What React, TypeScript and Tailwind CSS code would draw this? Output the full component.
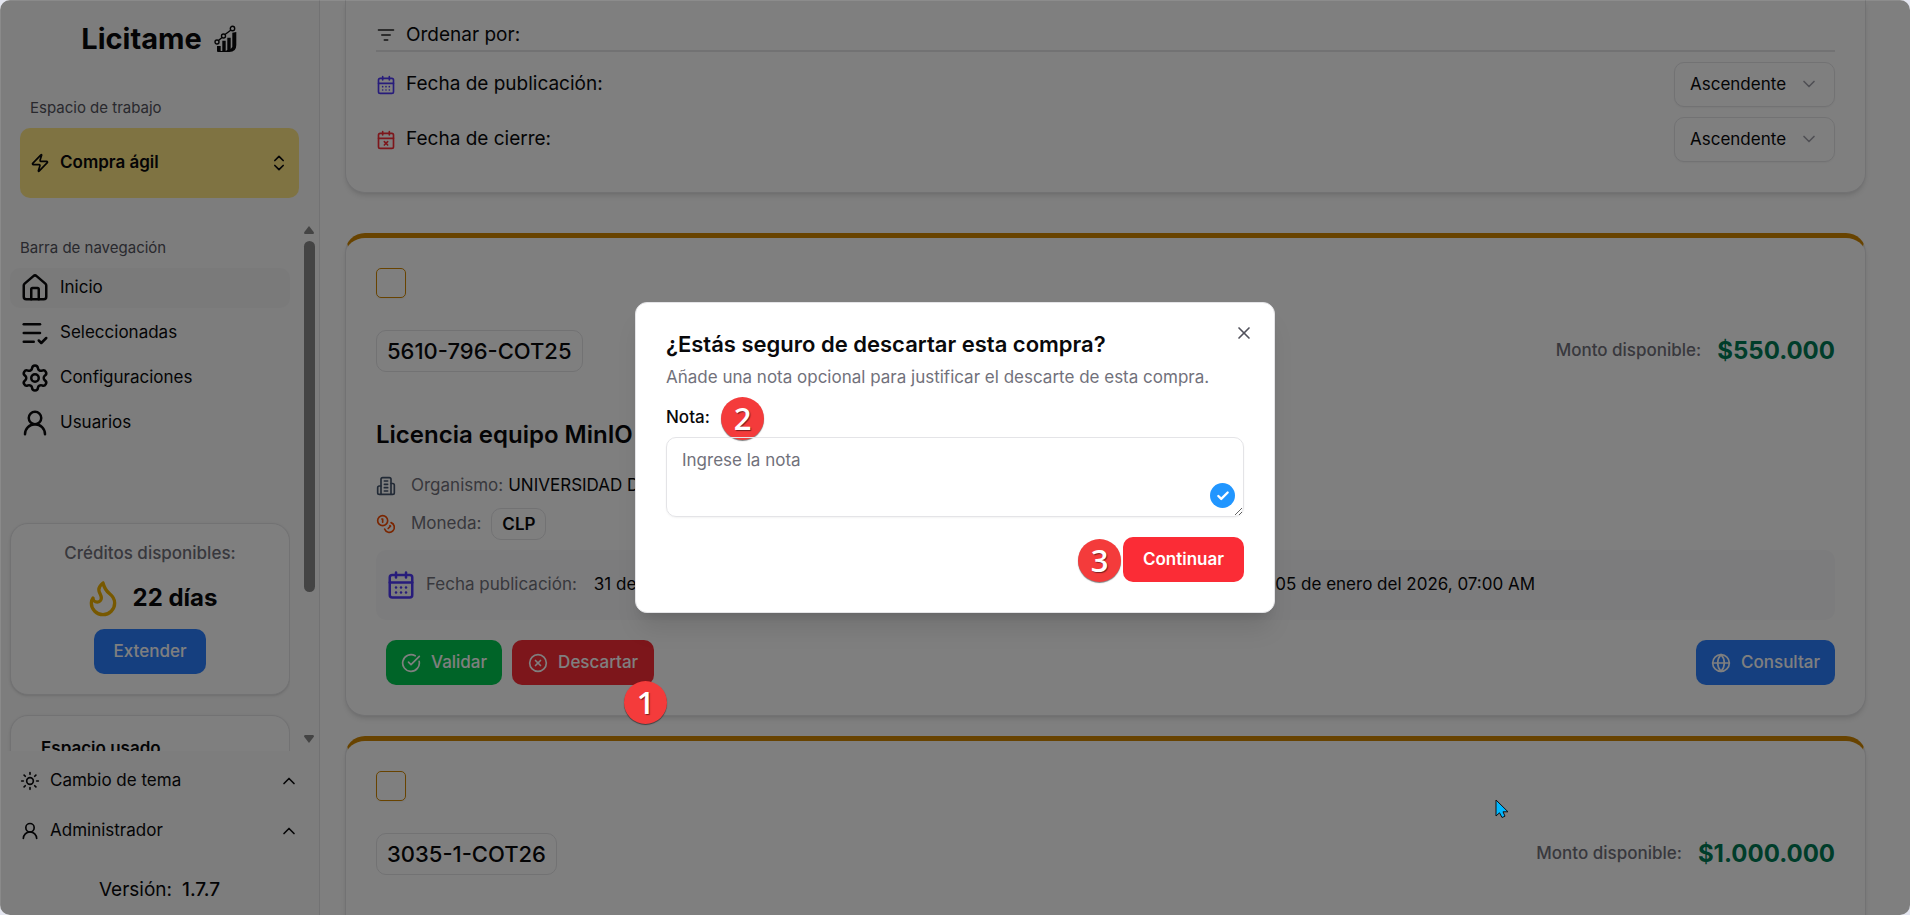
import React, { useState } from 'react';
import {
    CalendarDays,
    CalendarX,
    Check,
    ChevronDown,
    ChevronUp,
    ChevronsUpDown,
    CircleCheckBig,
    CircleX,
    Coins,
    Flame,
    Globe,
    House,
    ListCheck,
    Settings,
    Sun,
    UserRound,
    X,
    Zap,
} from 'lucide-react';

interface PurchaseDetails {
    title: string;
    organization: string;
    currency: string;
    publishedAt: string;
    closesAt: string;
}

interface Purchase {
    code: string;
    amount: string;
    details?: PurchaseDetails;
}

const purchases: Purchase[] = [
    {
        code: '5610-796-COT25',
        amount: '$550.000',
        details: {
            title: 'Licencia equipo MinIO',
            organization: 'UNIVERSIDAD DE CHILE',
            currency: 'CLP',
            publishedAt: '31 de diciembre del 2025, 10:00 AM',
            closesAt: '05 de enero del 2026, 07:00 AM',
        },
    },
    { code: '3035-1-COT26', amount: '$1.000.000' },
];

const navItems = [
    { label: 'Inicio', icon: House, active: true },
    { label: 'Seleccionadas', icon: ListCheck, active: false },
    { label: 'Configuraciones', icon: Settings, active: false },
    { label: 'Usuarios', icon: UserRound, active: false },
];

const Logo = () => (
    <svg width="24" height="28" viewBox="0 0 24 28" fill="none" stroke="currentColor">
        <path d="M4.500 15.500 8 12.500M11 9.500 17 5" strokeWidth="1.4" />
        <circle cx="3" cy="17" r="2" strokeWidth="1.4" />
        <circle cx="9.500" cy="11" r="2" strokeWidth="1.4" />
        <circle cx="18.500" cy="3.500" r="2.200" strokeWidth="1.4" />
        <path
            d="M3 21h3.700v5h1.600V15.700h3.400V26l1.600-1V12.700h3.400V24l1.600-2V7.800l4-.8v13q0 7-7 7H4a1 1 0 0 1-1-1z"
            fill="currentColor"
            stroke="none"
        />
    </svg>
);

const FilterIcon = () => (
    <svg width="20" height="20" viewBox="0 0 24 24" fill="none" stroke="#222" strokeWidth="2" strokeLinecap="round">
        <path d="M3 6h18M7 12h10M10 18h4" />
    </svg>
);

const BuildingIcon = () => (
    <svg
        className="text-slate-600"
        width="20"
        height="20"
        viewBox="0 0 24 24"
        fill="none"
        stroke="currentColor"
        strokeWidth="2"
        strokeLinecap="round"
        strokeLinejoin="round">
        <path d="M6 22V4a2 2 0 0 1 2-2h8a2 2 0 0 1 2 2v18Z" />
        <path d="M6 12H4a2 2 0 0 0-2 2v6a2 2 0 0 0 2 2h2M18 9h2a2 2 0 0 1 2 2v9a2 2 0 0 1-2 2h-2" />
        <path d="M10 6h4M10 10h4M10 14h4M10 18h4" />
    </svg>
);

const StepBadge: React.FC<{ step: number; className: string }> = ({ step, className }) => (
    <span
        className={`absolute flex size-[43px] items-center justify-center rounded-full bg-[#f43b3b] font-['Open_Sans',sans-serif] text-[31px] font-semibold text-white shadow-[0_1px_1px_rgba(0,0,0,0.5)] text-shadow-[1px_1px_1px_rgba(0,0,0,0.5)] ${className}`}>
        {step}
    </span>
);

const Sidebar = () => (
    <aside className="flex w-80 shrink-0 flex-col border-r border-zinc-200 bg-[#fafafa]">
        <div className="flex h-[78px] items-center justify-center gap-3">
            <h1 className="text-[29px] font-bold">Licitame</h1>
            <Logo />
        </div>

        <div className="px-5 pt-[15px]">
            <p className="px-[10px] text-[15px] leading-[30px] text-zinc-600">Espacio de trabajo</p>
            <button className="mt-[5px] flex h-[70px] w-[279px] items-center gap-[10px] rounded-[10px] bg-amber-200 px-[10px]">
                <Zap size={20} />
                <span className="flex-1 text-left text-[17px] font-semibold">Compra ágil</span>
                <ChevronsUpDown size={20} />
            </button>
        </div>

        <div className="mt-6 flex min-h-0 flex-1">
            <div className="min-w-0 flex-1 overflow-hidden pl-[10px]">
                <nav>
                    <p className="mt-2 px-[10px] text-[15px] leading-9 text-zinc-600">Barra de navegación</p>
                    <ul className="flex flex-col gap-[5px] pt-[2px]">
                        {navItems.map((item) => (
                            <li key={item.label}>
                                <a
                                    href="#"
                                    className={`flex h-10 items-center gap-[10px] rounded-[10px] px-[10px] text-[17px] ${
                                        item.active ? 'bg-zinc-100' : ''
                                    }`}>
                                    <item.icon size={30} />
                                    {item.label}
                                </a>
                            </li>
                        ))}
                    </ul>
                </nav>

                <div className="mt-20 flex flex-col items-center rounded-[18px] border border-zinc-200 bg-white pt-[14px] pb-5 shadow-sm">
                    <p className="text-[17px] leading-[30px] font-medium text-zinc-500">Créditos disponibles:</p>
                    <div className="mt-[10px] flex h-10 items-center gap-[10px]">
                        <Flame size={40} className="text-[#efb100]" />
                        <span className="text-2xl font-bold">22 días</span>
                    </div>
                    <button className="mt-[11px] h-[45px] rounded-[10px] bg-[#2b7fff] px-5 text-[17px] font-medium text-white">
                        Extender
                    </button>
                </div>

                <div className="mt-5 rounded-[18px] border border-zinc-200 bg-white px-[30px] pt-5 pb-5 shadow-sm">
                    <p className="text-[17px] leading-6 font-semibold">Espacio usado</p>
                </div>
            </div>

            <div className="flex w-[29px] flex-col items-center pt-1 pb-2 pl-[9px]">
                <svg width="10" height="8" viewBox="0 0 10 8" fill="#888">
                    <path d="M5 0 10 6.500Q10 8 9 8H1Q0 8 0 6.500Z" />
                </svg>
                <div className="mt-[7px] h-[351px] w-[11px] rounded-full bg-[#888]" />
                <svg className="mt-auto" width="10" height="8" viewBox="0 0 10 8" fill="#888">
                    <path d="M5 8 10 1.500Q10 0 9 0H1Q0 0 0 1.500Z" />
                </svg>
            </div>
        </div>

        <div className="flex flex-col gap-[10px] pt-[10px] text-[17px]">
            <button className="flex h-10 items-center gap-[10px] px-5">
                <Sun size={20} />
                <span className="flex-1 text-left">Cambio de tema</span>
                <ChevronUp size={20} />
            </button>
            <button className="flex h-10 items-center gap-[10px] px-5">
                <UserRound size={20} />
                <span className="flex-1 text-left">Administrador</span>
                <ChevronUp size={20} />
            </button>
        </div>
        <p className="flex items-center justify-center gap-[10px] pt-6 pb-[10px] text-[19px] leading-[30px]">
            Versión: <span className="font-medium">1.7.7</span>
        </p>
    </aside>
);

interface SortRowProps {
    id: string;
    label: string;
    icon: React.ReactNode;
}

const SortRow: React.FC<SortRowProps> = ({ id, label, icon }) => {
    const [order, setOrder] = useState<string>('asc');

    return (
        <div className="flex items-center justify-between">
            <label htmlFor={id} className="flex items-center gap-[10px] text-[19px]">
                {icon}
                {label}
            </label>
            <div className="relative">
                <select
                    id={id}
                    value={order}
                    onChange={(e) => setOrder(e.target.value)}
                    className="block h-[45px] w-[161px] appearance-none rounded-[10px] border border-zinc-200 bg-white px-[15px] text-[17px] shadow-xs">
                    <option value="asc">Ascendente</option>
                    <option value="desc">Descendente</option>
                </select>
                <ChevronDown size={20} className="pointer-events-none absolute top-3 right-4 text-zinc-400" />
            </div>
        </div>
    );
};

const PurchaseCard: React.FC<{ purchase: Purchase }> = ({ purchase }) => {
    const { code, amount, details } = purchase;

    return (
        <article className="rounded-[20px] border border-t-5 border-zinc-200 border-t-[#d08700] bg-white p-[30px] shadow-md">
            <input
                type="checkbox"
                aria-label={code}
                className="block size-[30px] appearance-none rounded-[5px] border border-[#d08700] shadow-xs"
            />
            <div className="mt-8 mb-[45px] flex items-center justify-between">
                <span className="rounded-[10px] border border-zinc-200 px-[10px] text-[22px] leading-10 font-medium">
                    {code}
                </span>
                <p className="flex items-center gap-4 text-[17px] font-medium text-zinc-500">
                    Monto disponible: <span className="text-2xl font-bold text-[#007a55]">{amount}</span>
                </p>
            </div>

            {details && (
                <>
                    <h2 className="text-2xl leading-[35px] font-semibold">{details.title}</h2>
                    <div className="mt-4 flex h-9 items-center text-[17px]">
                        <BuildingIcon />
                        <span className="ml-[15px] text-zinc-500">Organismo:</span>
                        <span className="ml-[5px]">{details.organization}</span>
                    </div>
                    <div className="mt-1 flex h-8 items-center text-[17px]">
                        <Coins size={20} className="text-orange-600" />
                        <span className="ml-[15px] text-zinc-500">Moneda:</span>
                        <span className="ml-[10px] rounded-[10px] border border-zinc-200 px-[10px] leading-[30px] font-semibold">
                            {details.currency}
                        </span>
                    </div>
                    <div className="mt-[10px] grid h-[70px] grid-cols-2 items-center gap-4 rounded-[10px] bg-[#f9f9fa] px-[10px] text-[17px]">
                        <div className="flex items-center">
                            <CalendarDays size={30} className="text-[#4f39f6]" />
                            <span className="ml-[10px] text-zinc-500">Fecha publicación:</span>
                            <span className="ml-[17px]">{details.publishedAt}</span>
                        </div>
                        <div className="flex items-center">
                            <CalendarX size={30} className="text-[#e7000b]" />
                            <span className="ml-[10px] text-zinc-500">Fecha cierre:</span>
                            <span className="ml-[17px]">{details.closesAt}</span>
                        </div>
                    </div>
                    <div className="mt-5 flex gap-[10px] pl-[10px] text-[17px] font-medium text-white">
                        <button className="flex h-[45px] items-center gap-[10px] rounded-[10px] bg-[#00c950] px-[15px]">
                            <CircleCheckBig size={20} />
                            Validar
                        </button>
                        <button className="flex h-[45px] items-center gap-[10px] rounded-[10px] bg-[#fb2c36] px-4">
                            <CircleX size={20} />
                            Descartar
                        </button>
                        <button className="ml-auto flex h-[45px] items-center gap-[10px] rounded-[10px] bg-[#2b7fff] px-[15px]">
                            <Globe size={20} />
                            Consultar
                        </button>
                    </div>
                </>
            )}
        </article>
    );
};

const DiscardDialog = () => {
    const [note, setNote] = useState<string>('');

    return (
        <div
            role="dialog"
            aria-labelledby="discard-title"
            className="relative w-[640px] rounded-[12px] border border-zinc-200 bg-white p-[30px] shadow-xl">
            <h2 id="discard-title" className="text-[22px] leading-[22px] font-semibold">
                ¿Estás seguro de descartar esta compra?
            </h2>
            <p className="mt-[10px] text-[17px] leading-6 text-zinc-500">
                Añade una nota opcional para justificar el descarte de esta compra.
            </p>
            <button aria-label="Cerrar" className="absolute top-5 right-5 text-zinc-600">
                <X size={20} />
            </button>

            <div className="relative mt-4">
                <label htmlFor="note" className="block text-[17px] leading-6 font-medium">
                    Nota:
                </label>
                <StepBadge step={2} className="-top-2 left-[55px]" />
            </div>
            <div className="relative mt-2">
                <textarea
                    id="note"
                    value={note}
                    placeholder="Ingrese la nota"
                    onChange={(e) => setNote(e.target.value)}
                    className="block h-20 w-full rounded-[10px] border border-zinc-200 px-[15px] py-[10px] text-[17px] leading-6 shadow-xs placeholder:text-zinc-500"
                />
                <span className="absolute right-[9px] bottom-[9px] flex size-[25px] items-center justify-center rounded-full bg-[#2196ff] text-white">
                    <Check size={14} strokeWidth={4} />
                </span>
            </div>
            <div className="mt-5 flex justify-end">
                <div className="relative">
                    <button className="h-[45px] rounded-[10px] bg-[#fb2c36] px-5 text-[17px] font-semibold text-white">
                        Continuar
                    </button>
                    <StepBadge step={3} className="top-[2px] right-[123px]" />
                </div>
            </div>
        </div>
    );
};

const App = () => {
    return (
        <div className="h-screen bg-[#e4e6f0]">
            <div className="relative flex h-full overflow-hidden rounded-[10px] bg-white font-[Inter,sans-serif] text-zinc-950">
                <Sidebar />

                <main className="min-w-0 flex-1 overflow-hidden pr-11 pl-[25px]">
                    <section className="rounded-b-[20px] border border-t-0 border-zinc-200 bg-white px-[30px] pt-5 pb-[30px] shadow-md">
                        <h2 className="flex items-center gap-[10px] border-b-2 border-zinc-200 text-[19px] leading-[30px]">
                            <FilterIcon />
                            Ordenar por:
                        </h2>
                        <div className="mt-[10px] flex flex-col gap-[10px]">
                            <SortRow
                                id="published"
                                label="Fecha de publicación:"
                                icon={<CalendarDays size={20} className="text-[#4f39f6]" />}
                            />
                            <SortRow
                                id="closing"
                                label="Fecha de cierre:"
                                icon={<CalendarX size={20} className="text-[#fb2c36]" />}
                            />
                        </div>
                    </section>

                    <div className="mt-10 flex flex-col gap-5">
                        {purchases.map((purchase) => (
                            <PurchaseCard key={purchase.code} purchase={purchase} />
                        ))}
                    </div>
                </main>

                <div className="absolute inset-0 flex items-center justify-center bg-black/50 inset-shadow-[1px_1px_0_rgba(255,255,255,0.1)]">
                    <DiscardDialog />
                </div>

                <StepBadge step={1} className="top-[681px] left-[624px]" />
                <svg
                    className="absolute top-[799px] left-[1495px]"
                    width="15"
                    height="20"
                    viewBox="0 0 15 20"
                    fill="#00b7ff"
                    stroke="#111">
                    <path d="M1 1v16l3.500-3.200L7 18.500l3-1.300-2-4.400h5z" />
                </svg>
            </div>
        </div>
    );
};

export default App;
